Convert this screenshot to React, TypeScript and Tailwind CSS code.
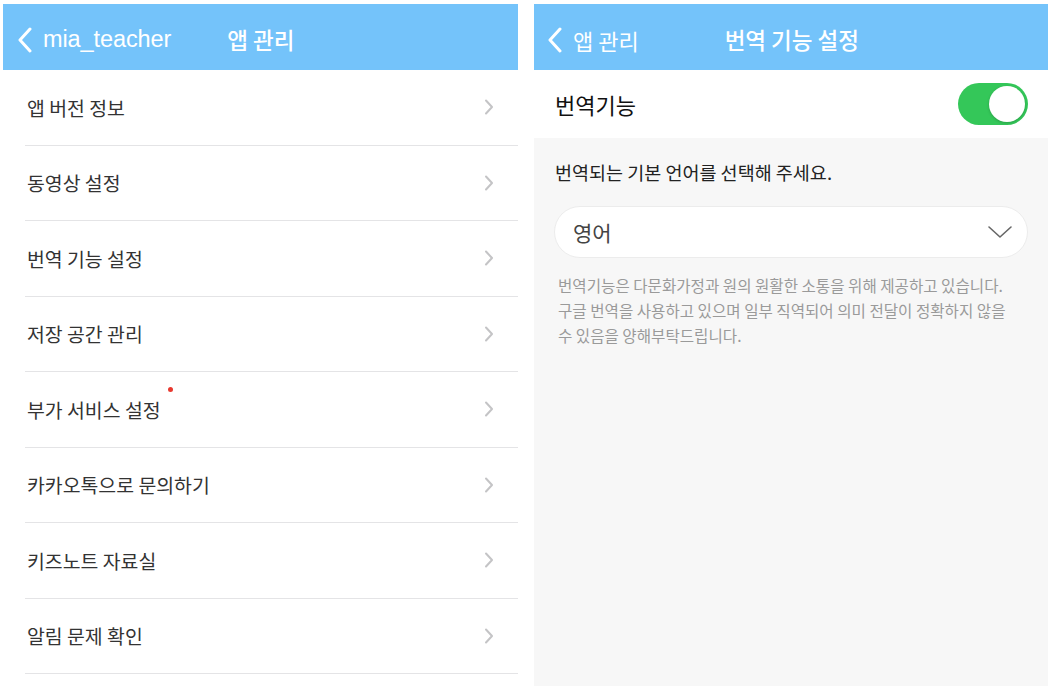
import React from "react";

const font = { fontFamily: '"Noto Sans CJK KR", "Noto Sans", sans-serif' };

const items = [
  "앱 버전 정보",
  "동영상 설정",
  "번역 기능 설정",
  "저장 공간 관리",
  "부가 서비스 설정",
  "카카오톡으로 문의하기",
  "키즈노트 자료실",
  "알림 문제 확인",
];

function BackChevron() {
  return (
    <svg width="16" height="26" viewBox="0 0 16 26" className="shrink-0">
      <path d="M13 2 L3 13 L13 24" fill="none" stroke="white" strokeWidth="3" strokeLinecap="round" strokeLinejoin="round" />
    </svg>
  );
}

function RowChevron() {
  return (
    <svg width="10" height="16" viewBox="0 0 10 16">
      <path d="M2 1.5 L8 8 L2 14.5" fill="none" stroke="#c4c4c6" strokeWidth="2" strokeLinecap="round" strokeLinejoin="round" />
    </svg>
  );
}

export default function App() {
  return (
    <div className="w-[1056px] h-[686px] bg-white flex pt-[4px] overflow-hidden" style={font}>
      {/* Left panel */}
      <div className="ml-[3px] w-[515px] flex flex-col bg-white">
        <div className="h-[66px] bg-[#74c3fa] flex items-center pl-[14px] pt-[5px] text-white">
          <BackChevron />
          <span className="ml-[10px] text-[23.5px] leading-none tracking-[-0.1px]" style={{ fontFamily: '"Liberation Sans", "Noto Sans CJK KR", sans-serif' }}>mia_teacher</span>
          <span className="ml-[56px] text-[22.5px] font-medium leading-none">앱 관리</span>
        </div>
        <div className="flex flex-col pl-[22px]">
          {items.map((t, i) => (
            <div key={i} className="h-[75.5px] flex items-center justify-between border-b border-[#e4e4e6] pl-[2px] pr-[24px]">
              <span className="relative text-[19.4px] text-[#333333] leading-none">
                {t}
                {i === 4 && (
                  <span className="absolute right-[-12px] top-[-13px] w-[5px] h-[5px] rounded-full bg-[#e8392f]" />
                )}
              </span>
              <RowChevron />
            </div>
          ))}
        </div>
      </div>

      {/* Right panel */}
      <div className="ml-[16px] w-[514px] flex flex-col">
        <div className="h-[66px] bg-[#74c3fa] flex items-center pl-[13px] pt-[5px] text-white shrink-0">
          <BackChevron />
          <span className="ml-[10px] text-[22px] leading-none">앱 관리</span>
          <span className="ml-[86px] text-[22.5px] font-medium leading-none">번역 기능 설정</span>
        </div>
        <div className="h-[68px] bg-white flex items-center justify-between pl-[21px] pr-[20px] shrink-0">
          <span className="text-[22px] text-[#111111] leading-none">번역기능</span>
          <div className="w-[70px] h-[42px] rounded-full bg-[#34c759] p-[3px] flex justify-end">
            <div className="w-[36px] h-[36px] rounded-full bg-white shadow-[0_1px_3px_rgba(0,0,0,0.2)]" />
          </div>
        </div>
        <div className="flex-1 bg-[#f7f7f7] pt-[22px] pl-[20px] pr-[20px]">
          <div className="text-[18.5px] text-[#222222] leading-[24px] pl-[1px]">번역되는 기본 언어를 선택해 주세요.</div>
          <div className="mt-[22px] h-[52px] rounded-full bg-white border border-[#ececec] flex items-center justify-between pl-[18px] pr-[14px]">
            <span className="text-[21px] text-[#444444] leading-none">영어</span>
            <svg width="26" height="14" viewBox="0 0 26 14">
              <path d="M2 2 L13 12 L24 2" fill="none" stroke="#666666" strokeWidth="1.6" strokeLinecap="round" strokeLinejoin="round" />
            </svg>
          </div>
          <div className="mt-[15px] pl-[4px] text-[15.6px] leading-[25px] text-[#9a9a9a] whitespace-nowrap">
            번역기능은 다문화가정과 원의 원활한 소통을 위해 제공하고 있습니다.
            <br />
            구글 번역을 사용하고 있으며 일부 직역되어 의미 전달이 정확하지 않을
            <br />
            수 있음을 양해부탁드립니다.
          </div>
        </div>
      </div>
    </div>
  );
}
